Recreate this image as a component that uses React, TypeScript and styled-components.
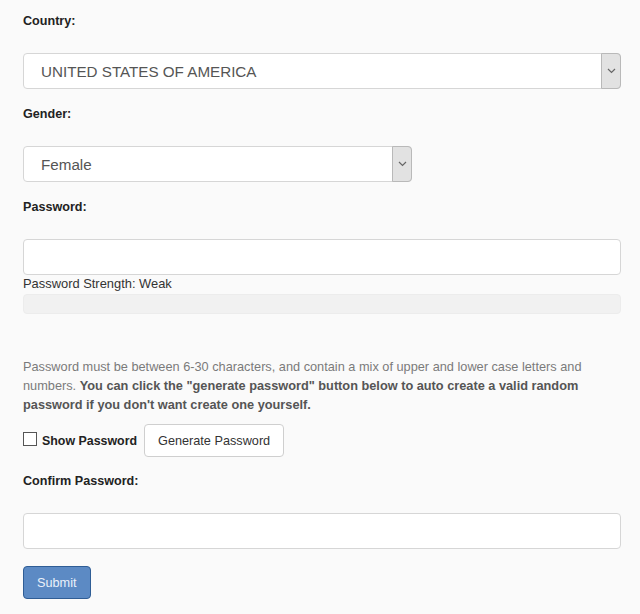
import styled, { createGlobalStyle } from "styled-components";

const GlobalStyle = createGlobalStyle`
  html, body {
    margin: 0;
    padding: 0;
    background: #fafafa;
  }
  body {
    font-family: "Liberation Sans", Arial, sans-serif;
    color: #333;
  }
`;

const Form = styled.form`
  width: 598px;
  padding: 11px 0 0 23px;
  display: flex;
  flex-direction: column;
`;

const Group = styled.div<{ $gap?: number }>`
  display: flex;
  flex-direction: column;
  margin-bottom: ${(p) => p.$gap ?? 15}px;
`;

const Label = styled.label`
  display: block;
  font-size: 12.6px;
  font-weight: bold;
  line-height: 20px;
  color: #222;
  margin-bottom: 22px;
`;

const SelectBox = styled.div<{ $width?: number }>`
  width: ${(p) => (p.$width ? `${p.$width}px` : "100%")};
  height: 36px;
  box-sizing: border-box;
  display: flex;
  align-items: stretch;
  background: #fff;
  border: 1px solid #d6d6d6;
  border-radius: 4px;
`;

const SelectValue = styled.span`
  flex: 1;
  display: flex;
  align-items: center;
  padding-left: 17px;
  font-size: 15.2px;
  color: #555;
`;

const ArrowButton = styled.span`
  width: 18px;
  margin: -1px -1px -1px 0;
  display: flex;
  align-items: center;
  justify-content: center;
  background: #e2e2e2;
  border: 1px solid #b9b9b9;
  border-radius: 0 4px 4px 0;
`;

const TextInput = styled.input`
  width: 100%;
  height: 36px;
  box-sizing: border-box;
  background: #fff;
  border: 1px solid #d6d6d6;
  border-radius: 4px;
  padding: 0 12px;
  font-family: inherit;
  font-size: 13px;
  outline: none;
`;

const Strength = styled.div`
  font-size: 12.9px;
  line-height: 18px;
  color: #333;
`;

const ProgressTrack = styled.div`
  height: 20px;
  box-sizing: border-box;
  background: #f1f1f1;
  border: 1px solid #ececec;
  border-radius: 4px;
  margin-top: 1px;
`;

const Help = styled.p`
  margin: 43px 0 0;
  font-size: 12.75px;
  line-height: 19px;
  color: #7a7a7a;

  b {
    color: #555;
  }
`;

const ActionsRow = styled.div`
  display: flex;
  align-items: center;
  margin: 10px 0 14px;
`;

const CheckLabel = styled.label`
  display: flex;
  align-items: center;
  font-size: 12.4px;
  font-weight: bold;
  color: #222;
  margin-right: 7px;
`;

const CheckBox = styled.span`
  width: 14px;
  height: 14px;
  box-sizing: border-box;
  border: 1px solid #555;
  background: #fff;
  margin-right: 5px;
  margin-top: -4px;
`;

const Button = styled.button<{ $primary?: boolean }>`
  height: 33px;
  box-sizing: border-box;
  padding: 0 13px;
  font-family: inherit;
  font-size: 12.7px;
  border-radius: 4px;
  cursor: pointer;
  background: ${(p) => (p.$primary ? "#5c8ac4" : "#fff")};
  border: 1px solid ${(p) => (p.$primary ? "#2f5d95" : "#cfcfcf")};
  color: ${(p) => (p.$primary ? "#eaf1fa" : "#333")};
`;

const SubmitRow = styled.div`
  margin-top: 17px;
`;

const Chevron = () => (
  <svg width="9" height="6" viewBox="0 0 9 6">
    <path d="M1 1l3.5 3.5L8 1" fill="none" stroke="#666" strokeWidth="1.2" />
  </svg>
);

const FakeSelect = ({ value, width }: { value: string; width?: number }) => (
  <SelectBox $width={width}>
    <SelectValue>{value}</SelectValue>
    <ArrowButton>
      <Chevron />
    </ArrowButton>
  </SelectBox>
);

export default function App() {
  return (
    <>
      <GlobalStyle />
      <Form onSubmit={(e) => e.preventDefault()}>
        <Group>
          <Label>Country:</Label>
          <FakeSelect value="UNITED STATES OF AMERICA" />
        </Group>
        <Group>
          <Label>Gender:</Label>
          <FakeSelect value="Female" width={389} />
        </Group>
        <Group $gap={0}>
          <Label>Password:</Label>
          <TextInput type="password" />
          <Strength>Password Strength: Weak</Strength>
          <ProgressTrack />
        </Group>
        <Help>
          Password must be between 6-30 characters, and contain a mix of upper
          and lower case letters and numbers.{" "}
          <b>
            You can click the "generate password" button below to auto create a
            valid random password if you don't want create one yourself.
          </b>
        </Help>
        <ActionsRow>
          <CheckLabel>
            <CheckBox />
            Show Password
          </CheckLabel>
          <Button type="button">Generate Password</Button>
        </ActionsRow>
        <Group $gap={0}>
          <Label>Confirm Password:</Label>
          <TextInput type="password" />
        </Group>
        <SubmitRow>
          <Button $primary type="submit">
            Submit
          </Button>
        </SubmitRow>
      </Form>
    </>
  );
}
